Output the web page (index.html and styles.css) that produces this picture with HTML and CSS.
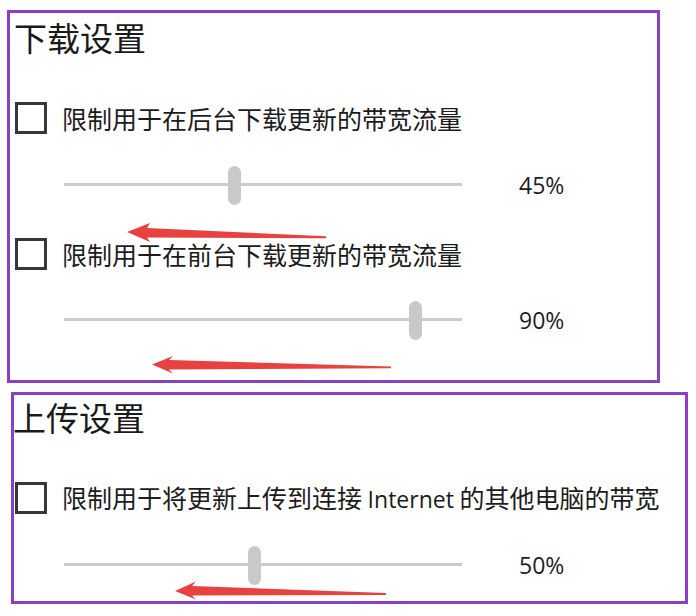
FILE: index.html
```html
<!DOCTYPE html>
<html lang="zh-CN">
<head>
<meta charset="utf-8">
<title>下载设置</title>
<link rel="stylesheet" href="styles.css">
</head>
<body>
<div class="page">
  <section class="group group-download">
    <h2 class="group-title">下载设置</h2>
    <div class="check-row">
      <span class="checkbox"></span>
      <span class="check-label">限制用于在后台下载更新的带宽流量</span>
    </div>
    <div class="slider-row">
      <div class="slider"><span class="track"></span><span class="thumb" style="--pos:0.426"></span></div>
      <span class="value">45%</span>
    </div>
    <div class="check-row check-row-second">
      <span class="checkbox"></span>
      <span class="check-label">限制用于在前台下载更新的带宽流量</span>
    </div>
    <div class="slider-row slider-row-second">
      <div class="slider"><span class="track"></span><span class="thumb" style="--pos:0.896"></span></div>
      <span class="value">90%</span>
    </div>
  </section>
  <section class="group group-upload">
    <h2 class="group-title">上传设置</h2>
    <div class="check-row">
      <span class="checkbox"></span>
      <span class="check-label">限制用于将更新上传到连接 <span class="latin">Internet</span> 的其他电脑的带宽</span>
    </div>
    <div class="slider-row">
      <div class="slider"><span class="track"></span><span class="thumb" style="--pos:0.478"></span></div>
      <span class="value">50%</span>
    </div>
  </section>
  <svg class="annotations" width="696" height="616" viewBox="0 0 696 616" aria-hidden="true">
    <polygon class="arrow" points="127,232 150,223 147,228 326,236.3 326,238.2 147,237.5 150,242"/>
    <polygon class="arrow" points="152,364.5 173,356 169,360 391,366.5 391,368.3 169,369.5 173,373.5"/>
    <polygon class="arrow" points="175,591 196,581.5 192,586 386,593 386,595 192,595.5 196,599.5"/>
  </svg>
</div>
</body>
</html>
```

FILE: styles.css
```css
html, body {
  margin: 0;
  padding: 0;
  background: #ffffff;
}

body {
  font-family: "Noto Sans CJK SC", "Open Sans", sans-serif;
  color: #1c1c1c;
}

.page {
  position: relative;
  width: 696px;
  height: 616px;
  padding: 10px 0 0 7px;
  box-sizing: border-box;
}

.group {
  box-sizing: border-box;
  border: 3px solid #8a3fc6;
  display: flex;
  flex-direction: column;
}

.group-download {
  width: 653px;
  height: 373px;
  padding-left: 4px;
}

.group-upload {
  width: 677px;
  height: 212px;
  margin-left: 4px;
  margin-top: 9px;
  padding-left: 0;
}

.group-title {
  margin: 4px 0 0 0;
  font-size: 33px;
  font-weight: 400;
  line-height: 40px;
  height: 40px;
  color: #1a1a1a;
}

.group-upload .group-title {
  margin-top: 2px;
  margin-left: -1px;
}

.check-row {
  display: flex;
  align-items: center;
  height: 32px;
  margin-top: 45px;
}

.check-row-second {
  margin-top: 33px;
}

.checkbox {
  box-sizing: border-box;
  width: 32px;
  height: 32px;
  border: 3px solid #383838;
  margin-left: 1px;
  flex: none;
}

.check-label {
  margin-left: 15px;
  font-size: 25px;
  line-height: 32px;
  white-space: nowrap;
  color: #1c1c1c;
}

.latin {
  font-family: "Open Sans", sans-serif;
  font-size: 23px;
}

.slider-row {
  display: flex;
  align-items: center;
  height: 40px;
  margin-top: 31px;
}

.slider-row-second {
  margin-top: 30px;
}

.slider {
  position: relative;
  width: 398px;
  height: 40px;
  margin-left: 50px;
  flex: none;
}

.track {
  position: absolute;
  left: 0;
  right: 0;
  top: 18px;
  height: 3px;
  background: #cccccc;
}

.thumb {
  position: absolute;
  top: 1px;
  left: calc(var(--pos) * (100% - 13px));
  width: 13px;
  height: 39px;
  border-radius: 7px;
  background: #c9c9c9;
}

.value {
  margin-left: 57px;
  font-family: "Open Sans", sans-serif;
  font-size: 23px;
  color: #1e1e1e;
}

.annotations {
  position: absolute;
  left: 0;
  top: 0;
  pointer-events: none;
}

.arrow {
  fill: #e8413f;
}
```
